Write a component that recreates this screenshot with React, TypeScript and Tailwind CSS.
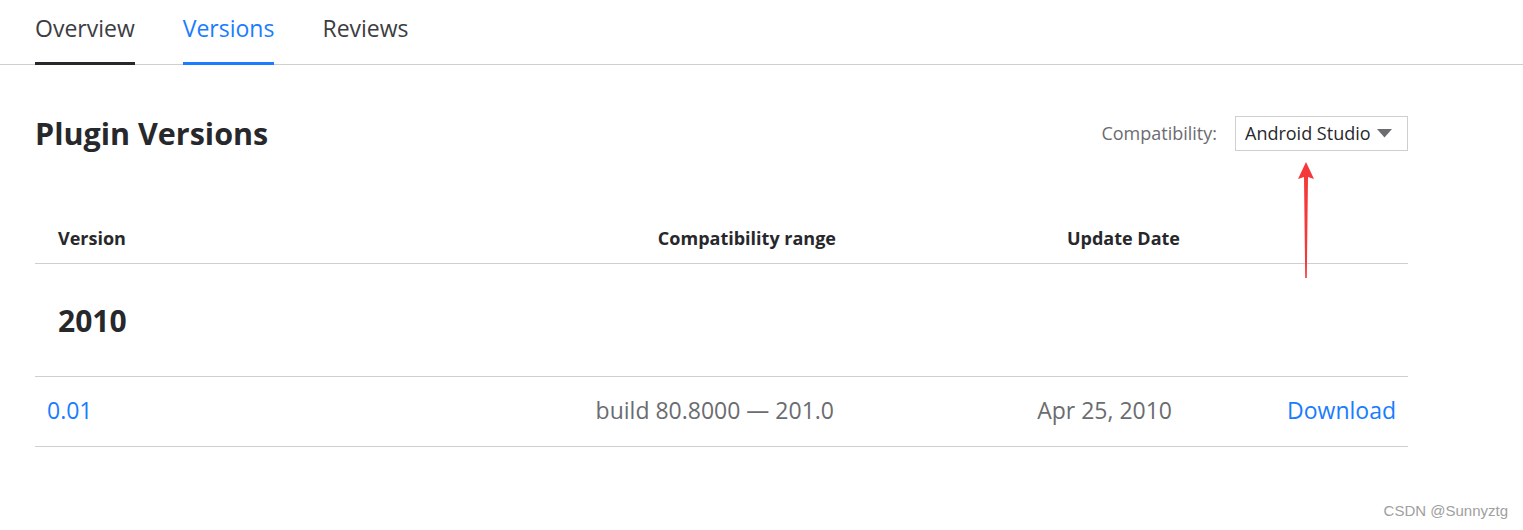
const FONT = { fontFamily: '"Segoe UI", "Open Sans", "Noto Sans", sans-serif' }

const TABS = ['Overview', 'Versions', 'Reviews']

export default function App() {
  return (
    <div className="relative h-[530px] w-[1523px] overflow-hidden bg-white" style={FONT}>
      <nav className="flex border-b border-[#cfcfcf] pl-[35px]">
        {TABS.map((tab, i) => (
          <div
            key={tab}
            className={`mr-[48px] -mb-px border-b-[3px] pb-[17px] pt-[11px] text-[23px] leading-[34px] ${
              i === 1
                ? 'border-[#1a7cff] text-[#1a7cff]'
                : i === 0
                  ? 'border-[#27282c] text-[#3c3d42]'
                  : 'border-transparent text-[#3c3d42]'
            }`}
          >
            {tab}
          </div>
        ))}
      </nav>

      <div className="w-[1373px] pl-[35px] box-content">
        <div className="mt-[49px] flex items-center justify-between">
          <h1 className="text-[30.5px] font-bold leading-[38px] text-[#27282c]">Plugin Versions</h1>
          <div className="flex items-center">
            <span className="mr-[18px] text-[18px] text-[#6b6c70]">Compatibility:</span>
            <div className="flex h-[35px] w-[173px] items-center border border-[#cfcfcf] pl-[9px] text-[18px] text-[#27282c]">
              Android Studio
              <svg width="15" height="9" viewBox="0 0 15 9" className="ml-[6px]">
                <path d="M0 0 H15 L7.5 8.5 Z" fill="#6b6c70" />
              </svg>
            </div>
          </div>
        </div>

        <div className="mt-[74px] flex border-b border-[#cfcfcf] pb-[13px] text-[18px] font-bold leading-[24px] text-[#27282c]">
          <div className="w-[500px] pl-[23px]">Version</div>
          <div className="w-[301px] text-right">Compatibility range</div>
          <div className="w-[344px] text-right">Update Date</div>
        </div>

        <div className="flex h-[113px] items-center border-b border-[#cfcfcf] pl-[23px] text-[30px] font-bold text-[#27282c]">
          2010
        </div>

        <div className="flex h-[70px] items-center border-b border-[#cfcfcf] pb-[3px] text-[23px]">
          <div className="w-[500px] pl-[12px] text-[#1a7cff]">0.01</div>
          <div className="w-[299px] text-right text-[#6b6c70]">build 80.8000 — 201.0</div>
          <div className="w-[338px] text-right text-[#6b6c70]">Apr 25, 2010</div>
          <div className="flex-1 pr-[12px] text-right text-[#1a7cff]">Download</div>
        </div>
      </div>

      <svg className="absolute left-[1296px] top-[162px]" width="20" height="118" viewBox="0 0 20 118">
        <path d="M10 0 L18 17 L12 15 L10.8 116 L9.2 116 L8 15 L2 17 Z" fill="#f5393b" />
      </svg>

      <div
        className="absolute bottom-[8px] right-[15px] text-[15px] text-[#a0a0a0]"
        style={{ fontFamily: '"Liberation Sans", Arial, sans-serif' }}
      >
        CSDN @Sunnyztg
      </div>
    </div>
  )
}
